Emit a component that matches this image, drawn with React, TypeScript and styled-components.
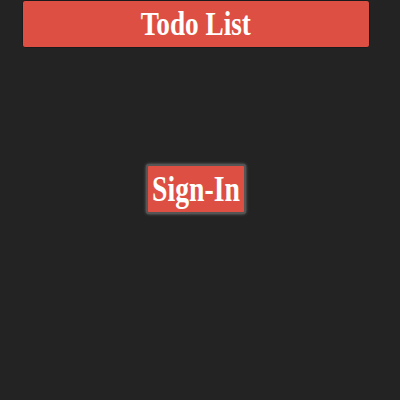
import styled, { createGlobalStyle } from "styled-components";

const GlobalStyle = createGlobalStyle`
  html, body {
    margin: 0;
    padding: 0;
    background: #232323;
  }
  body {
    font-family: "Liberation Serif", serif;
  }
`;

const Page = styled.div`
  width: 392px;
  height: 400px;
  display: flex;
  flex-direction: column;
  align-items: center;
`;

const Header = styled.header`
  box-sizing: border-box;
  width: 348px;
  height: 48px;
  background: #dd4f42;
  border: 1px solid #1a1a1a;
  border-radius: 3px;
  display: flex;
  align-items: center;
  justify-content: center;
`;

const Narrow = styled.span<{ $squeeze: number }>`
  display: inline-block;
  transform: scaleX(${(p) => p.$squeeze});
  white-space: nowrap;
`;

const Title = styled.h1`
  margin: 0;
  color: #fff;
  font-size: 33px;
  font-weight: bold;
  line-height: 1;
`;

const Main = styled.main`
  display: flex;
  justify-content: center;
  padding-top: 116px;
`;

const SignInButton = styled.button`
  box-sizing: border-box;
  width: 100px;
  height: 50px;
  padding: 0;
  display: flex;
  align-items: center;
  justify-content: center;
  background: #dd4f42;
  color: #fff;
  font-family: inherit;
  font-size: 36px;
  font-weight: bold;
  line-height: 1;
  border: 2px solid #555;
  border-radius: 3px;
  box-shadow: 0 0 3px rgba(140, 140, 140, 0.8);
  cursor: pointer;
`;

export default function App() {
  return (
    <>
      <GlobalStyle />
      <Page>
        <Header>
          <Title>
            <Narrow $squeeze={0.825}>Todo List</Narrow>
          </Title>
        </Header>
        <Main>
          <SignInButton>
            <Narrow $squeeze={0.77}>Sign-In</Narrow>
          </SignInButton>
        </Main>
      </Page>
    </>
  );
}
